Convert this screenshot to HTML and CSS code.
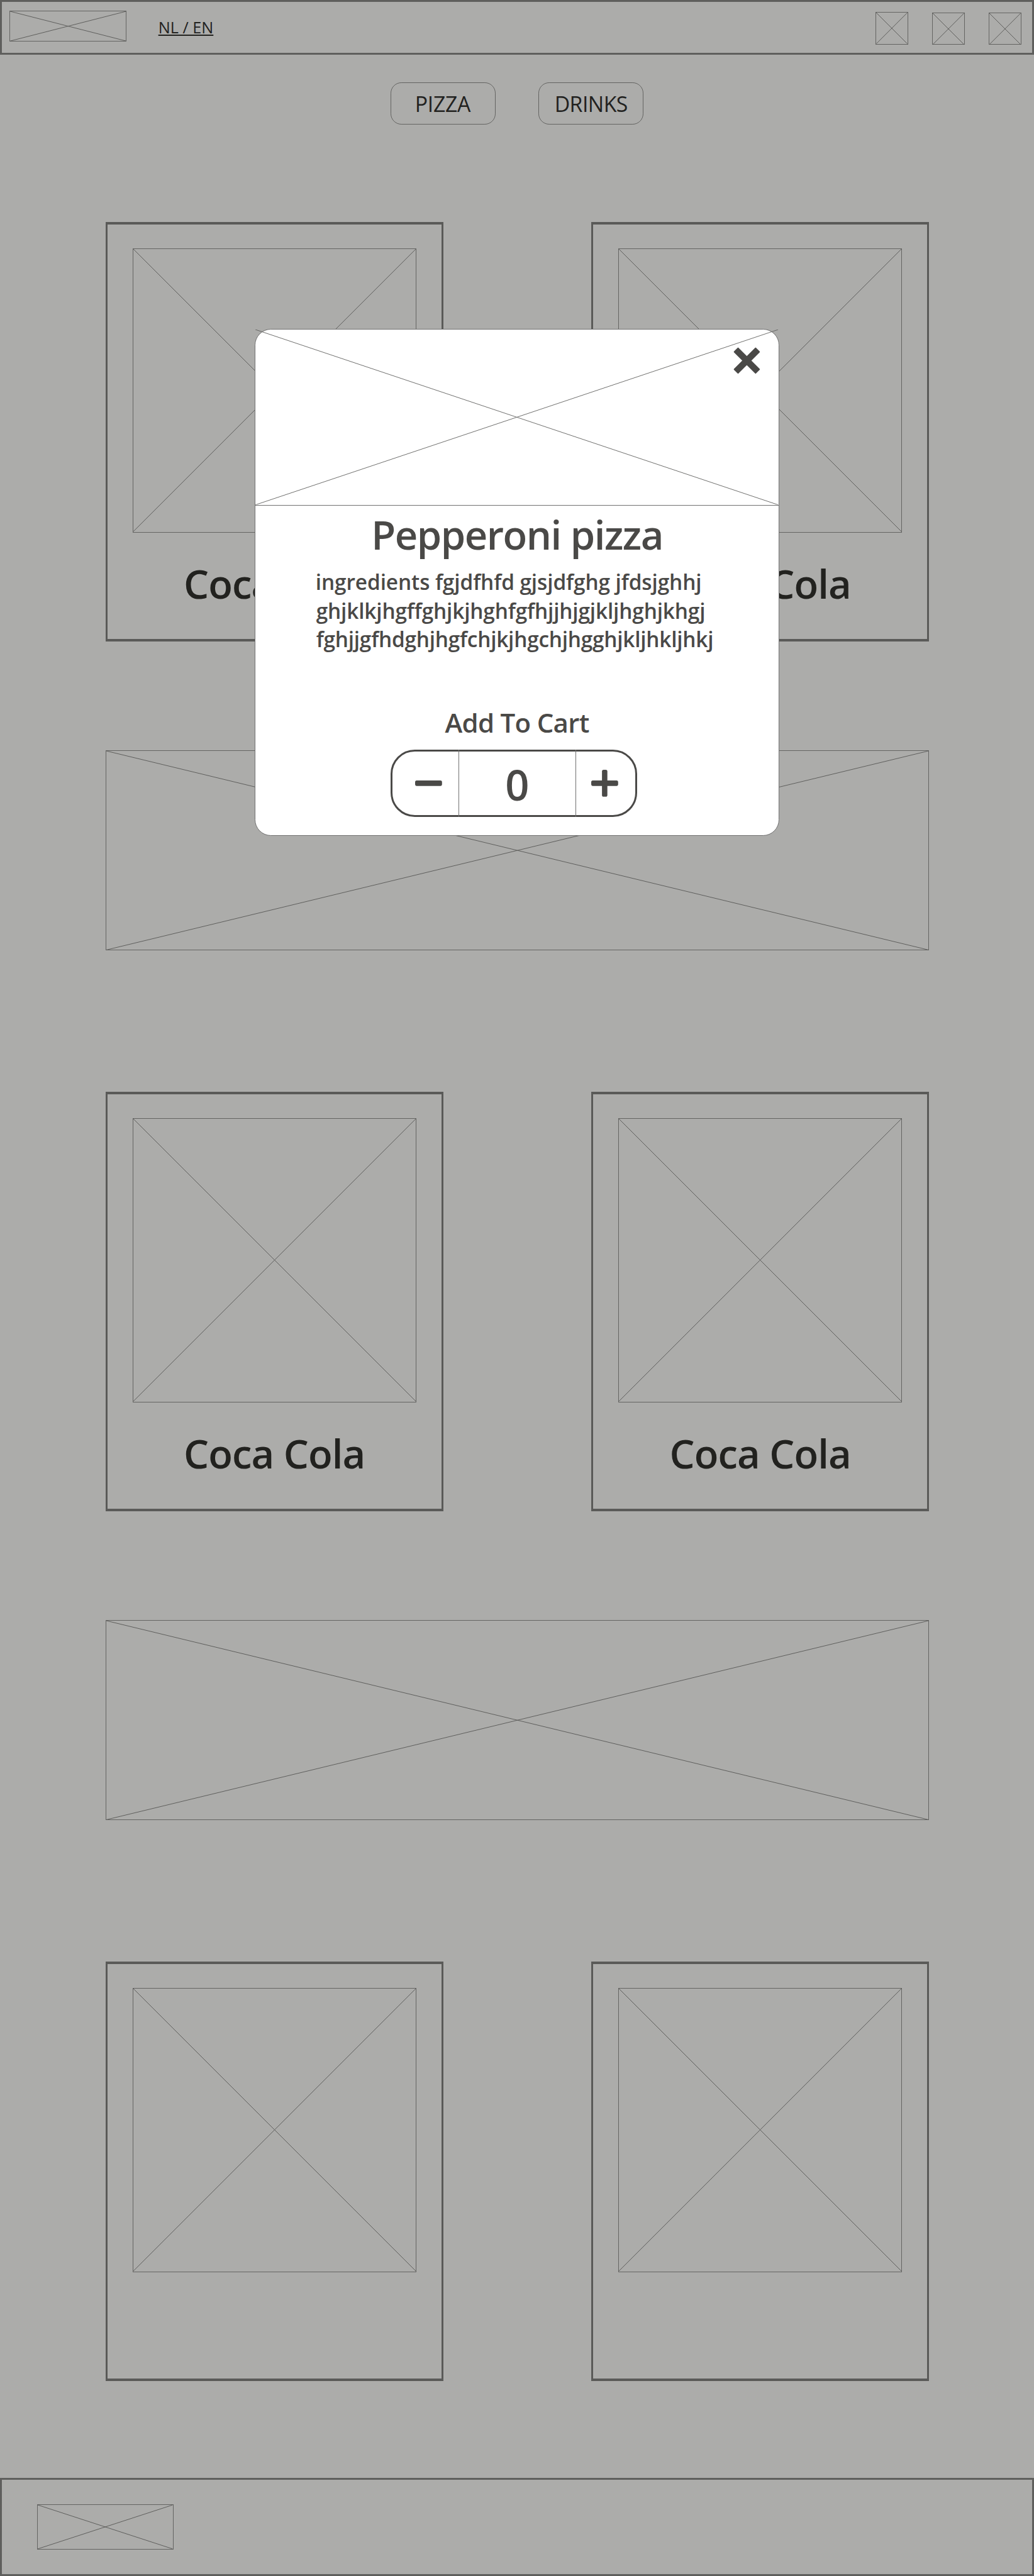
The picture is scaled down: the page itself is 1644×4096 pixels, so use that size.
FILE: index.html
```
<!DOCTYPE html>
<html lang="en">
<head>
<meta charset="utf-8">
<title>Menu</title>
<link rel="stylesheet" href="styles.css">
</head>
<body>
<svg width="0" height="0" class="defs">
  <symbol id="cross" viewBox="0 0 100 100" preserveAspectRatio="none">
    <path d="M0 0L100 100M100 0L0 100" vector-effect="non-scaling-stroke"/>
  </symbol>
</svg>
<div class="page">
  <header class="header">
    <div class="placeholder logo"><svg><use href="#cross"/></svg></div>
    <a class="lang">NL / EN</a>
    <div class="icons">
      <div class="placeholder icon"><svg><use href="#cross"/></svg></div>
      <div class="placeholder icon"><svg><use href="#cross"/></svg></div>
      <div class="placeholder icon"><svg><use href="#cross"/></svg></div>
    </div>
  </header>

  <nav class="tabs">
    <a class="tab tab-pizza">PIZZA</a>
    <a class="tab tab-drinks">DRINKS</a>
  </nav>

  <main class="menu">
    <section class="row">
      <article class="card"><div class="placeholder photo"><svg><use href="#cross"/></svg></div><h2 class="name">Coca Cola</h2></article>
      <article class="card"><div class="placeholder photo"><svg><use href="#cross"/></svg></div><h2 class="name">Coca Cola</h2></article>
    </section>
    <div class="placeholder banner"><svg><use href="#cross"/></svg></div>
    <section class="row">
      <article class="card"><div class="placeholder photo"><svg><use href="#cross"/></svg></div><h2 class="name">Coca Cola</h2></article>
      <article class="card"><div class="placeholder photo"><svg><use href="#cross"/></svg></div><h2 class="name">Coca Cola</h2></article>
    </section>
    <div class="placeholder banner"><svg><use href="#cross"/></svg></div>
    <section class="row">
      <article class="card"><div class="placeholder photo"><svg><use href="#cross"/></svg></div></article>
      <article class="card"><div class="placeholder photo"><svg><use href="#cross"/></svg></div></article>
    </section>
  </main>

  <footer class="footer">
    <div class="placeholder footer-logo"><svg><use href="#cross"/></svg></div>
  </footer>

  <div class="modal">
    <div class="modal-image"><svg><use href="#cross"/></svg></div>
    <svg class="close" viewBox="0 0 50 50">
      <g transform="rotate(45 25 25)"><rect x="-4" y="19" width="58" height="12" rx="1.2"/><rect x="19" y="-4" width="12" height="58" rx="1.2"/></g>
    </svg>
    <h1 class="title">Pepperoni pizza</h1>
    <p class="ingredients">
      <span>ingredients fgjdfhfd gjsjdfghg jfdsjghhj</span>
      <span>ghjklkjhgffghjkjhghfgfhjjhjgjkljhghjkhgj</span>
      <span>fghjjgfhdghjhgfchjkjhgchjhgghjkljhkljhkj</span>
    </p>
    <div class="add">Add To Cart</div>
    <div class="stepper">
      <div class="step minus"><svg viewBox="0 0 50 50"><rect y="20" width="50" height="10" rx="3"/></svg></div>
      <div class="count">0</div>
      <div class="step plus"><svg viewBox="0 0 50 50"><rect y="20" width="50" height="10" rx="3"/><rect x="20" width="10" height="50" rx="3"/></svg></div>
    </div>
  </div>
</div>
</body>
</html>
```
FILE: styles.css
```
html { font-size: 85.61px; }
* { box-sizing: border-box; margin: 0; padding: 0; }
body {
  font-family: "Open Sans", "Noto Sans", sans-serif;
  background: #acacaa;
  color: #22221f;
}
.defs { position: absolute; }
.page {
  position: relative;
  width: 100%;
  height: 4096px;
  display: flex;
  flex-direction: column;
  overflow: hidden;
}

.placeholder { border: 1px solid #646462; }
.placeholder svg { display: block; width: 100%; height: 100%; overflow: visible; }
#cross path { stroke: #5f5f5d; stroke-width: 1px; fill: none; }

.header {
  height: 1.02rem;
  flex: none;
  border: 3px solid #5f5f5d;
  display: flex;
  align-items: flex-start;
  padding: calc(.2rem - 3px) calc(.235rem - 3px) 0 calc(.17rem - 3px);
}
.logo { width: 2.18rem; height: .575rem; }
.lang {
  margin-left: .59rem;
  margin-top: .1rem;
  font-size: .295rem;
  line-height: .4rem;
  text-decoration: underline;
  text-decoration-thickness: .02rem;
  text-underline-offset: .02rem;
}
.icons { margin-left: auto; display: flex; gap: .445rem; }
.icon { width: .605rem; height: .605rem; margin-top: .03rem; }
.icon:first-child { margin-top: .02rem; }

.tabs { flex: none; margin-top: .51rem; display: flex; justify-content: center; gap: .8rem; }
.tab {
  width: 1.95rem;
  height: .78rem;
  border: 1px solid #646462;
  border-radius: .2rem;
  font-size: .395rem;
  line-height: .785rem;
  text-align: center;
}
.tab-pizza { letter-spacing: -.01em; padding-right: .01rem; }
.tab-drinks { letter-spacing: -.017em; }

.menu { flex: none; padding: 0 1.95rem 0 1.96rem; margin-top: 1.81rem; }
.row { display: flex; justify-content: space-between; }
.card {
  width: 6.27rem;
  height: 7.8rem;
  border: 3px solid #5a5a58;
  border-width: 4px 3px;
  padding-top: calc(.5rem - 4px);
}
.photo { width: 5.27rem; height: 5.27rem; margin: 0 auto; }
.name {
  margin-top: .453rem;
  font-size: .74rem;
  font-weight: 600;
  line-height: 1rem;
  letter-spacing: -.0145em;
  text-align: center;
}
.banner { height: 3.72rem; margin: 2.01rem 0 2.625rem; }

.footer {
  flex: none;
  margin-top: auto;
  height: 1.82rem;
  border: 3px solid #5f5f5d;
  padding: calc(.49rem - 3px) 0 0 calc(.69rem - 3px);
}
.footer-logo { width: 2.53rem; height: .84rem; }

.modal {
  position: absolute;
  left: 4.735rem;
  top: 6.11rem;
  width: 9.735rem;
  height: 9.41rem;
  background: #fff;
  border: 1px solid #707070;
  border-radius: .3rem;
  color: #4a4947;
}
.modal-image { height: calc(3.28rem - 1px); border-bottom: 1px solid #707070; }
.modal-image svg { display: block; width: 100%; height: 100%; overflow: visible; }
.modal-image use { opacity: .9; }
.close {
  position: absolute;
  right: .34rem;
  top: .325rem;
  width: .5rem;
  height: .5rem;
  overflow: visible;
  fill: #4a4947;
}
.title {
  margin-top: .033rem;
  font-size: .74rem;
  font-weight: 600;
  line-height: 1rem;
  letter-spacing: -.023em;
  text-align: center;
}
.ingredients {
  margin: .127rem 0 0 1.115rem;
  font-size: .39rem;
  font-weight: 600;
  line-height: .531rem;
  white-space: nowrap;
}
.ingredients span { display: block; letter-spacing: -.003em; }
.ingredients span:nth-child(2) { letter-spacing: -.0046em; margin-left: .01rem; }
.ingredients span:nth-child(3) { letter-spacing: -.007em; margin-left: .01rem; }
.add {
  margin-top: .977rem;
  font-size: .49rem;
  font-weight: 600;
  line-height: .6rem;
  letter-spacing: -.0165em;
  text-align: center;
}
.stepper {
  margin: .2rem 0 0 2.505rem;
  width: 4.58rem;
  height: 1.26rem;
  border: 3px solid #4a4947;
  border-radius: .45rem;
  display: flex;
}
.step { display: flex; align-items: center; justify-content: center; }
.step svg { width: .5rem; height: .5rem; fill: #4a4947; }
.minus { flex: 0 0 calc(1.265rem - 3px); padding-left: .11rem; }
.plus { flex: 1; padding-right: .03rem; }
.plus svg { overflow: visible; }
.count {
  flex: 0 0 2.18rem;
  margin: -3px 0;
  border: solid #707070;
  border-width: 0 1px;
  font-size: .78rem;
  font-weight: 600;
  line-height: 1.31rem;
  text-align: center;
}
```
